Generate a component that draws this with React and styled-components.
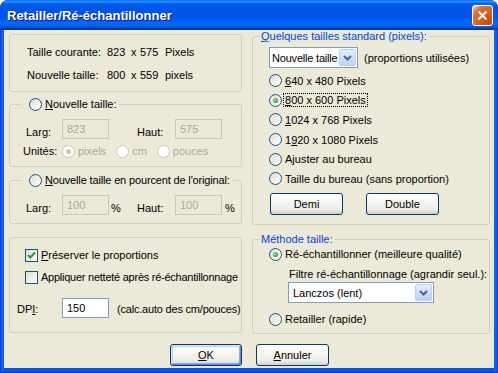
import React from 'react';
import styled, { createGlobalStyle } from 'styled-components';

const GlobalStyle = createGlobalStyle`
  html, body {
    margin: 0;
    padding: 0;
    background: #ffffff;
  }
  body {
    font-family: 'Liberation Sans', Arial, sans-serif;
    font-size: 11px;
    color: #000;
  }
`;

const Window = styled.div`
  width: 498px;
  height: 373px;
  box-sizing: border-box;
  display: flex;
  flex-direction: column;
  background: linear-gradient(90deg, #0831d9 0, #166aee 2px, #0855dd 4px, #0855dd 494px, #166aee 496px, #0831d9 498px);
  border-radius: 8px 8px 0 0;
  overflow: hidden;
`;

const TitleBar = styled.div`
  height: 30px;
  flex: none;
  display: flex;
  align-items: center;
  justify-content: space-between;
  padding: 0 5px 0 7px;
  background: linear-gradient(
    180deg,
    #0058ee 0%,
    #3593ff 4%,
    #288eff 6%,
    #127dff 8%,
    #036ffc 10%,
    #0262ee 14%,
    #0057e5 20%,
    #0054e3 24%,
    #0055eb 56%,
    #005bf5 66%,
    #026afe 76%,
    #0062ef 86%,
    #0052d6 92%,
    #0040ab 94%,
    #003092 100%
  );
`;

const Title = styled.span`
  color: #fff;
  font-weight: bold;
  font-size: 13px;
  text-shadow: 1px 1px 0 #0f1089;
`;

const CloseButton = styled.span`
  width: 21px;
  height: 21px;
  box-sizing: border-box;
  border: 1px solid #fff;
  border-radius: 3px;
  background: radial-gradient(circle at 85% 85%, #cc4600 0%, #dc6527 55%, #cd7546 72%, #ffccb2 98%);
  display: flex;
  align-items: center;
  justify-content: center;
`;

const Frame = styled.div`
  flex: 1;
  display: flex;
  padding: 0 4px 4px;
  box-sizing: border-box;
  border-bottom: 1px solid #0831d9;
`;

const Client = styled.div`
  flex: 1;
  background: #ece9d8;
  padding: 0 4px 0 5px;
  display: flex;
  flex-direction: column;
`;

const Columns = styled.div`
  display: grid;
  grid-template-columns: 233px 238px;
  column-gap: 10px;
  align-items: start;
`;

const Column = styled.div`
  display: flex;
  flex-direction: column;
  padding-top: ${p => p.$top || 0}px;
`;

const Group = styled.fieldset`
  margin: ${p => p.$mt || 0}px 0 0;
  padding: ${p => p.$pad || '0'};
  height: ${p => p.$h}px;
  box-sizing: border-box;
  min-width: 0;
  border: 1px solid #d0d0bf;
  border-radius: 3px;
  display: flex;
  flex-direction: column;
`;

const Legend = styled.legend`
  margin-left: ${p => p.$ml ?? 6}px;
  padding: 0 2px 0 ${p => p.$pl ?? 2}px;
  height: ${p => p.$h || 13}px;
  line-height: ${p => p.$h || 13}px;
  color: ${p => (p.$blue ? '#0046d5' : '#000')};
  letter-spacing: ${p => (p.$tight ? '-0.15px' : 'normal')};
  display: flex;
  align-items: center;
  gap: 3px;
`;

const InfoGrid = styled.div`
  display: grid;
  grid-template-columns: 80px 24px 9px 25px auto;
  grid-auto-rows: 23px;
  align-items: center;
`;

const Row = styled.div`
  display: flex;
  align-items: center;
  height: ${p => p.$h || 16}px;
  margin-top: ${p => p.$mt || 0}px;
  padding-left: ${p => p.$pl || 0}px;
`;

const Label = styled.span`
  width: ${p => (p.$w ? `${p.$w}px` : 'auto')};
  flex: none;
  padding-top: ${p => p.$dy || 0}px;
  color: ${p => (p.$disabled ? '#aca899' : '#000')};
  letter-spacing: ${p => (p.$tight ? '-0.2px' : 'normal')};
  white-space: nowrap;
`;

const Option = styled.label`
  display: flex;
  align-items: center;
  gap: 3px;
  margin-right: ${p => p.$mr || 0}px;
  color: ${p => (p.$disabled ? '#aca899' : '#000')};
  letter-spacing: ${p => (p.$tight ? '-0.25px' : 'normal')};
  white-space: nowrap;
`;

const Focus = styled.span`
  outline: 1px dotted #000;
  padding: 0 1px;
  margin-left: -1px;
`;

const Radio = styled.span`
  flex: none;
  width: 13px;
  height: 13px;
  box-sizing: border-box;
  border-radius: 50%;
  border: 1px solid ${p => (p.$disabled ? '#cac8bb' : '#1c5180')};
  background: ${p => (p.$disabled ? '#fff' : 'linear-gradient(135deg, #dcdcd7 0%, #ffffff 100%)')};
  display: flex;
  align-items: center;
  justify-content: center;

  &::after {
    content: '';
    display: ${p => (p.$checked ? 'block' : 'none')};
    width: 5px;
    height: 5px;
    border-radius: 50%;
    background: ${p =>
      p.$disabled ? '#cac8bb' : 'radial-gradient(circle at 35% 35%, #8ee88c 0%, #21a121 75%)'};
  }
`;

const CheckBox = styled.span`
  flex: none;
  width: 13px;
  height: 13px;
  box-sizing: border-box;
  border: 1px solid #1c5180;
  background: linear-gradient(135deg, #dcdcd7 0%, #ffffff 100%);
  display: flex;
  align-items: center;
  justify-content: center;
`;

const Field = styled.span`
  width: ${p => p.$w}px;
  height: 20px;
  box-sizing: border-box;
  flex: none;
  border: 1px solid ${p => (p.$disabled ? '#c9c7ba' : '#7f9db9')};
  background: ${p => (p.$disabled ? '#ebe8d7' : '#fff')};
  color: ${p => (p.$disabled ? '#aca899' : '#000')};
  padding-left: 4px;
  display: flex;
  align-items: center;
  margin-right: ${p => p.$mr || 0}px;
`;

const Combo = styled.div`
  width: ${p => p.$w}px;
  height: 21px;
  box-sizing: border-box;
  flex: none;
  border: 1px solid #7f9db9;
  background: #fff;
  padding: 1px;
  display: flex;
  align-items: center;
  margin-right: ${p => p.$mr || 0}px;
`;

const ComboText = styled.span`
  flex: 1;
  min-width: 0;
  padding-left: ${p => p.$pl ?? 3}px;
  letter-spacing: ${p => (p.$tight ? '-0.2px' : 'normal')};
  white-space: nowrap;
`;

const ComboButton = styled.span`
  width: 17px;
  flex: none;
  align-self: stretch;
  box-sizing: border-box;
  border: 1px solid #b9cff6;
  border-radius: 2px;
  background: linear-gradient(180deg, #e6eefc 0%, #d1dffb 45%, #bcd0f8 100%);
  display: flex;
  align-items: center;
  justify-content: center;
`;

const ButtonRow = styled.div`
  display: flex;
  justify-content: ${p => p.$justify || 'center'};
  gap: ${p => p.$gap || 14}px;
  margin-top: ${p => p.$mt || 0}px;
  padding-left: ${p => p.$pl || 0}px;
`;

const Button = styled.button`
  font: inherit;
  color: #000;
  width: ${p => p.$w}px;
  height: 22px;
  box-sizing: border-box;
  padding: 0;
  border: 1px solid #003c74;
  border-radius: 3px;
  background: linear-gradient(180deg, #ffffff 0%, #f5f4ef 45%, #ecebe6 80%, #d6d0c5 100%);
  box-shadow: ${p =>
    p.$default
      ? 'inset 1px 1px 0 #cee7ff, inset -1px -1px 0 #6982ee, inset 2px 2px 0 #bcd4f6, inset -2px -2px 0 #89ade4'
      : 'none'};
`;

const Chevron = () => (
  <svg width="9" height="6" viewBox="0 0 9 6">
    <polyline points="1,1 4.5,4.5 8,1" fill="none" stroke="#4d6185" strokeWidth="2" />
  </svg>
);

const Tick = () => (
  <svg width="11" height="11" viewBox="0 0 11 11">
    <polyline points="2,5 4.3,7.5 9,2.5" fill="none" stroke="#21a121" strokeWidth="2" />
  </svg>
);

const CloseX = () => (
  <svg width="11" height="11" viewBox="0 0 11 11">
    <path d="M1.5 1.5 L9.5 9.5 M9.5 1.5 L1.5 9.5" stroke="#fff" strokeWidth="2" />
  </svg>
);

const sizes = [
  { key: '6', rest: '40 x 480 Pixels' },
  { key: '8', rest: '00 x 600 Pixels', checked: true },
  { key: '1', rest: '024 x 768 Pixels' },
  { pre: '1', key: '9', rest: '20 x 1080 Pixels' },
  { rest: 'Ajuster au bureau' },
  { rest: 'Taille du bureau (sans proportion)' },
];

const App = () => {
  return (
    <>
      <GlobalStyle />
      <Window>
        <TitleBar>
          <Title>Retailler/Ré-échantillonner</Title>
          <CloseButton>
            <CloseX />
          </CloseButton>
        </TitleBar>
        <Frame>
          <Client>
            <Columns>
              <Column $top={4}>
                <Group $h={58} $pad="5px 0 0 17px">
                  <InfoGrid>
                    <span>Taille courante:</span>
                    <span>823</span>
                    <span>x</span>
                    <span>575</span>
                    <span>Pixels</span>
                    <span>Nouvelle taille:</span>
                    <span>800</span>
                    <span>x</span>
                    <span>559</span>
                    <span>pixels</span>
                  </InfoGrid>
                </Group>

                <Group $h={71} $mt={4}>
                  <Legend $ml={11} $pl={8} $h={16}>
                    <Radio />
                    <span>
                      <u>N</u>ouvelle taille:
                    </span>
                  </Legend>
                  <Row $h={20} $mt={7} $pl={16}>
                    <Label $w={36} $dy={5}>Larg:</Label>
                    <Field $w={47} $disabled $mr={28}>823</Field>
                    <Label $w={38} $dy={5}>Haut:</Label>
                    <Field $w={47} $disabled>575</Field>
                  </Row>
                  <Row $h={16} $mt={4} $pl={13}>
                    <Label $w={39}>Unités:</Label>
                    <Option $disabled $mr={10}>
                      <Radio $disabled $checked />
                      pixels
                    </Option>
                    <Option $disabled $mr={10}>
                      <Radio $disabled />
                      cm
                    </Option>
                    <Option $disabled>
                      <Radio $disabled />
                      pouces
                    </Option>
                  </Row>
                </Group>

                <Group $h={52} $mt={5}>
                  <Legend $ml={11} $pl={8} $h={16} $tight>
                    <Radio />
                    <span>
                      <u>N</u>ouvelle taille en pourcent de l'original:
                    </span>
                  </Legend>
                  <Row $h={20} $mt={7} $pl={16}>
                    <Label $w={36} $dy={5}>Larg:</Label>
                    <Field $w={47} $disabled $mr={2}>100</Field>
                    <Label $w={26} $dy={5}>%</Label>
                    <Label $w={38} $dy={5}>Haut:</Label>
                    <Field $w={47} $disabled $mr={3}>100</Field>
                    <Label $dy={5}>%</Label>
                  </Row>
                </Group>

                <Group $h={96} $mt={13} $pad="9px 0 0 0">
                  <Row $h={16} $pl={15}>
                    <Option>
                      <CheckBox>
                        <Tick />
                      </CheckBox>
                      <span>
                        <u>P</u>réserver le proportions
                      </span>
                    </Option>
                  </Row>
                  <Row $h={16} $mt={6} $pl={15}>
                    <Option $tight>
                      <CheckBox />
                      Appliquer netteté après ré-échantillonnage
                    </Option>
                  </Row>
                  <Row $h={20} $mt={13} $pl={7}>
                    <Label $w={45} $dy={2}>
                      DP<u>I</u>:
                    </Label>
                    <Field $w={47} $mr={8}>150</Field>
                    <Label $dy={2} $tight>(calc.auto des cm/pouces)</Label>
                  </Row>
                </Group>
              </Column>

              <Column>
                <Group $h={195}>
                  <Legend $blue>
                    <span>
                      <u>Q</u>uelques tailles standard (pixels):
                    </span>
                  </Legend>
                  <Row $h={21} $mt={4} $pl={16}>
                    <Combo $w={89} $mr={6}>
                      <ComboText $pl={1} $tight>Nouvelle taille</ComboText>
                      <ComboButton>
                        <Chevron />
                      </ComboButton>
                    </Combo>
                    <Label>(proportions utilisées)</Label>
                  </Row>
                  {sizes.map((s, i) => (
                    <Row key={i} $h={19.6} $mt={i === 0 ? 3 : 0} $pl={16}>
                      <Option>
                        <Radio $checked={s.checked} />
                        {s.checked ? (
                          <Focus>
                            <u>{s.key}</u>
                            {s.rest}
                          </Focus>
                        ) : (
                          <span>
                            {s.pre}
                            {s.key && <u>{s.key}</u>}
                            {s.rest}
                          </span>
                        )}
                      </Option>
                    </Row>
                  ))}
                  <ButtonRow $justify="flex-start" $gap={23} $mt={4} $pl={17}>
                    <Button $w={73}>Demi</Button>
                    <Button $w={73}>Double</Button>
                  </ButtonRow>
                </Group>

                <Group $h={101} $mt={8}>
                  <Legend $blue>Méthode taille:</Legend>
                  <Row $h={16} $mt={0} $pl={16}>
                    <Option>
                      <Radio $checked />
                      Ré-échantillonner (meilleure qualité)
                    </Option>
                  </Row>
                  <Row $h={14} $mt={5} $pl={36}>
                    <Label>Filtre ré-échantillonnage (agrandir seul.):</Label>
                  </Row>
                  <Row $h={21} $mt={1} $pl={35}>
                    <Combo $w={146}>
                      <ComboText>Lanczos (lent)</ComboText>
                      <ComboButton>
                        <Chevron />
                      </ComboButton>
                    </Combo>
                  </Row>
                  <Row $h={16} $mt={8} $pl={16}>
                    <Option>
                      <Radio />
                      Retailler (rapide)
                    </Option>
                  </Row>
                </Group>
              </Column>
            </Columns>

            <ButtonRow $mt={10} $gap={14}>
              <Button $w={72} $default>
                <u>O</u>K
              </Button>
              <Button $w={73}>
                <u>A</u>nnuler
              </Button>
            </ButtonRow>
          </Client>
        </Frame>
      </Window>
    </>
  );
};

export default App;
